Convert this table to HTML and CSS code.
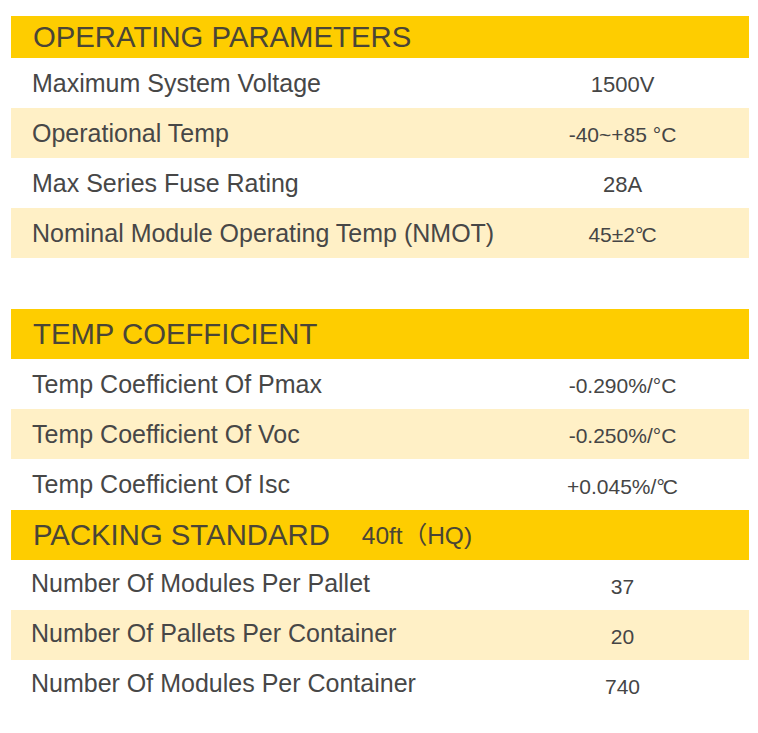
FILE: index.html
```html
<!DOCTYPE html>
<html>
<head>
<meta charset="utf-8">
<link rel="stylesheet" href="styles.css">
</head>
<body>
<div class="page">
  <section class="sec">
    <div class="head head-first">OPERATING PARAMETERS</div>
    <div class="row"><div class="lbl">Maximum System Voltage</div><div class="val v-big">1500V</div></div>
    <div class="row alt"><div class="lbl">Operational Temp</div><div class="val">-40~+85 °C</div></div>
    <div class="row"><div class="lbl">Max Series Fuse Rating</div><div class="val v-big">28A</div></div>
    <div class="row alt"><div class="lbl">Nominal Module Operating Temp (NMOT)</div><div class="val">45±2<span class="deg">°</span>C</div></div>
  </section>
  <section class="sec sec-gap">
    <div class="head">TEMP COEFFICIENT</div>
    <div class="row"><div class="lbl">Temp Coefficient Of Pmax</div><div class="val">-0.290%/°C</div></div>
    <div class="row alt"><div class="lbl">Temp Coefficient Of Voc</div><div class="val">-0.250%/°C</div></div>
    <div class="row tall"><div class="lbl">Temp Coefficient Of Isc</div><div class="val">+0.045%/<span class="deg">°</span>C</div></div>
  </section>
  <section class="sec">
    <div class="head">PACKING STANDARD<span class="sub">40ft（HQ)</span></div>
    <div class="row"><div class="lbl lbl-pack">Number Of Modules Per Pallet</div><div class="val">37</div></div>
    <div class="row alt"><div class="lbl lbl-pack">Number Of Pallets Per Container</div><div class="val">20</div></div>
    <div class="row"><div class="lbl lbl-pack">Number Of Modules Per Container</div><div class="val">740</div></div>
  </section>
</div>
</body>
</html>
```

FILE: styles.css
```css
html, body {
  margin: 0;
  padding: 0;
  background: #ffffff;
}
body {
  font-family: "Liberation Sans", Arial, "Noto Sans CJK SC", sans-serif;
}
.page {
  padding: 16px 9px 0 11px;
  width: 738px;
}
.sec {
  display: flex;
  flex-direction: column;
}
.sec-gap {
  margin-top: 51px;
}
.head {
  height: 50px;
  background: #fecd00;
  color: #4a4536;
  font-size: 29.3px;
  display: flex;
  align-items: center;
  padding-left: 22px;
  box-sizing: border-box;
}
.head-first {
  height: 42px;
}
.sub {
  font-size: 24.5px;
  margin-left: 32px;
  margin-top: -4px;
}
.row {
  height: 50px;
  display: grid;
  grid-template-columns: 485px 253px;
  align-items: center;
}
.row.tall {
  height: 51px;
}
.alt {
  background: #fff0c6;
}
.lbl {
  font-size: 25px;
  color: #474747;
  padding-left: 21px;
}
.lbl-pack {
  padding-left: 20px;
  padding-bottom: 3px;
}
.val {
  font-size: 21px;
  color: #454545;
  text-align: center;
  padding-top: 4px;
}
.v-big {
  font-size: 22px;
}
.deg {
  letter-spacing: -2px;
}
```
